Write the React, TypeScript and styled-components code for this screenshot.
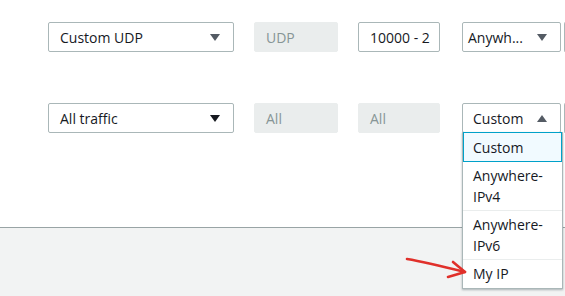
import React from "react";
import styled, { createGlobalStyle } from "styled-components";

const GlobalStyle = createGlobalStyle`
  html, body { margin: 0; padding: 0; background: #ffffff; }
  body { font-family: "Open Sans", "Noto Sans", Arial, sans-serif; color: #16191f; }
  * { box-sizing: border-box; }
`;

const Page = styled.div`
  position: relative;
  width: 565px;
  height: 296px;
  overflow: hidden;
  display: flex;
  flex-direction: column;
`;

const Main = styled.div`
  flex: 0 0 227px;
  background: #ffffff;
  padding: 22px 0 0 48px;
  display: flex;
  flex-direction: column;
  gap: 51px;
`;

const Footer = styled.div`
  flex: 1;
  background: #f2f3f3;
  border-top: 1px solid #99a4a5;
`;

const Row = styled.div`
  display: flex;
  align-items: center;
  height: 30px;
`;

const Select = styled.div<{ $w: number; $gap: number; $pl?: number }>`
  position: relative;
  flex: 0 0 ${(p) => p.$w}px;
  margin-right: ${(p) => p.$gap}px;
  height: 30px;
  border: 1px solid #aab7b8;
  border-radius: 2px;
  background: #ffffff;
  display: flex;
  align-items: center;
  justify-content: space-between;
  padding: 0 13px 0 ${(p) => p.$pl ?? 11}px;
  font-size: 14px;
  white-space: nowrap;
`;

const Field = styled.div<{ $w: number; $gap: number; $disabled?: boolean }>`
  flex: 0 0 ${(p) => p.$w}px;
  margin-right: ${(p) => p.$gap}px;
  height: 30px;
  border-radius: 2px;
  border: 1px solid ${(p) => (p.$disabled ? "#eaeded" : "#aab7b8")};
  background: ${(p) => (p.$disabled ? "#eaeded" : "#ffffff")};
  color: ${(p) => (p.$disabled ? "#879596" : "#16191f")};
  display: flex;
  align-items: center;
  padding: 0 0 0 11px;
  font-size: 14px;
  overflow: hidden;
  white-space: nowrap;
`;

const Cut = styled.div`
  flex: 0 0 10px;
  height: 30px;
  border: 1px solid #aab7b8;
  border-right: none;
  border-radius: 2px 0 0 2px;
`;

const Menu = styled.ul`
  position: absolute;
  top: 100%;
  left: -1px;
  width: 101px;
  margin: 0;
  padding: 0;
  list-style: none;
  background: #ffffff;
  border: 1px solid #aab7b8;
  border-top: none;
  box-shadow: 0 1px 2px rgba(0, 28, 36, 0.3);
  z-index: 5;
  white-space: normal;
`;

const Item = styled.li<{ $selected?: boolean }>`
  padding: ${(p) => (p.$selected ? "4px 10px 3px 9px" : "3px 10px")};
  line-height: 21px;
  font-size: 14px;
  color: #16191f;
  background: ${(p) => (p.$selected ? "#f1faff" : "#ffffff")};
  border: ${(p) => (p.$selected ? "1px solid #00a1c9" : "none")};
  border-bottom: 1px solid ${(p) => (p.$selected ? "#00a1c9" : "#eaeded")};
  &:last-child { border-bottom: none; padding-bottom: 4px; }
`;

const Arrow = styled.svg`
  position: absolute;
  left: 400px;
  top: 250px;
  width: 72px;
  height: 34px;
  z-index: 6;
`;

const Caret = ({ up, color }: { up?: boolean; color: string }) => (
  <svg width="10" height="7" viewBox="0 0 10 7">
    <polygon points={up ? "0,7 10,7 5,0" : "0,0 10,0 5,7"} fill={color} />
  </svg>
);

export default function App() {
  return (
    <>
      <GlobalStyle />
      <Page>
        <Main>
          <Row>
            <Select $w={186} $gap={20}>
              <span>Custom UDP</span>
              <Caret color="#545b64" />
            </Select>
            <Field $w={84} $gap={20} $disabled>UDP</Field>
            <Field $w={82} $gap={22}>10000 - 2</Field>
            <Select $w={99} $gap={3} $pl={5}>
              <span>Anywh...</span>
              <Caret color="#545b64" />
            </Select>
            <Cut />
          </Row>
          <Row>
            <Select $w={186} $gap={20}>
              <span>All traffic</span>
              <Caret color="#16191f" />
            </Select>
            <Field $w={84} $gap={20} $disabled>All</Field>
            <Field $w={82} $gap={22} $disabled>All</Field>
            <Select $w={99} $gap={3} $pl={10}>
              <span>Custom</span>
              <Caret up color="#545b64" />
              <Menu>
                <Item $selected>Custom</Item>
                <Item>Anywhere-IPv4</Item>
                <Item>Anywhere-IPv6</Item>
                <Item>My IP</Item>
              </Menu>
            </Select>
            <Cut />
          </Row>
        </Main>
        <Footer />
        <Arrow viewBox="0 0 72 34">
          <g fill="none" stroke="#e0302a" strokeWidth="2.6" strokeLinecap="round" strokeLinejoin="round">
            <path d="M7 9 C 25 12, 45 17, 65 22" />
            <path d="M53 12 L65 22 L48 27" />
          </g>
        </Arrow>
      </Page>
    </>
  );
}
